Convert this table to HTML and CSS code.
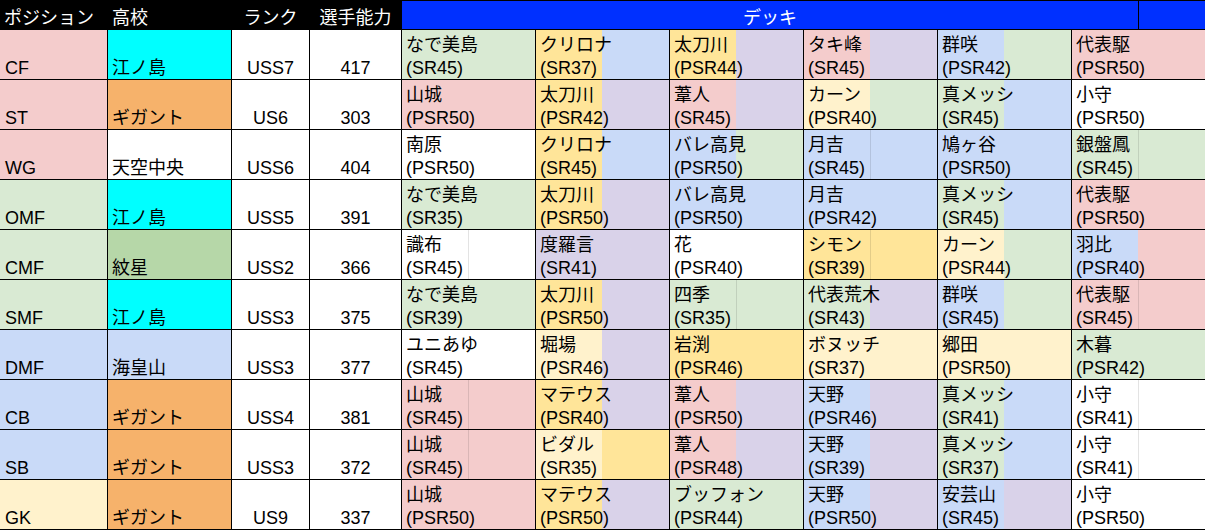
FILE: index.html
```html
<!DOCTYPE html>
<html lang="ja">
<head>
<meta charset="utf-8">
<title>デッキ</title>
<link rel="stylesheet" href="styles.css">
</head>
<body>
<div class="sheet">
  <div class="h">ポジション</div>
  <div class="h">高校</div>
  <div class="h c">ランク</div>
  <div class="h c">選手能力</div>
  <div class="hdeck"><div class="hd-main">デッキ</div><div class="hd-sep"></div><div class="hd-end"></div></div>

  <div class="cell pos pk">CF</div>
  <div class="cell sch cy">江ノ島</div>
  <div class="cell num">USS7</div>
  <div class="cell num">417</div>
  <div class="deck a-gr b-gr"><span>なで美島</span><span>(SR45)</span></div>
  <div class="deck a-ye b-bl"><span>クリロナ</span><span>(SR37)</span></div>
  <div class="deck a-ye b-pu"><span>太刀川</span><span>(PSR44)</span></div>
  <div class="deck a-pk b-pu"><span>タキ峰</span><span>(SR45)</span></div>
  <div class="deck a-bl b-gr"><span>群咲</span><span>(PSR42)</span></div>
  <div class="deck a-pk b-pk"><span>代表駆</span><span>(PSR50)</span></div>

  <div class="cell pos pk">ST</div>
  <div class="cell sch or">ギガント</div>
  <div class="cell num">US6</div>
  <div class="cell num">303</div>
  <div class="deck a-pk b-pk"><span>山城</span><span>(PSR50)</span></div>
  <div class="deck a-ye b-pu"><span>太刀川</span><span>(PSR42)</span></div>
  <div class="deck a-pk b-pu"><span>葦人</span><span>(SR45)</span></div>
  <div class="deck a-cr b-gr"><span>カーン</span><span>(PSR40)</span></div>
  <div class="deck a-gr b-bl"><span>真メッシ</span><span>(SR45)</span></div>
  <div class="deck a-wh b-wh"><span>小守</span><span>(PSR50)</span></div>

  <div class="cell pos pk">WG</div>
  <div class="cell sch wh">天空中央</div>
  <div class="cell num">USS6</div>
  <div class="cell num">404</div>
  <div class="deck a-wh b-wh"><span>南原</span><span>(PSR50)</span></div>
  <div class="deck a-ye b-bl"><span>クリロナ</span><span>(SR45)</span></div>
  <div class="deck a-bl b-gr"><span>バレ高見</span><span>(PSR50)</span></div>
  <div class="deck a-bl b-bl ln"><span>月吉</span><span>(SR45)</span></div>
  <div class="deck a-bl b-bl"><span>鳩ヶ谷</span><span>(PSR50)</span></div>
  <div class="deck a-gr b-gr ln"><span>銀盤鳳</span><span>(SR45)</span></div>

  <div class="cell pos gr">OMF</div>
  <div class="cell sch cy">江ノ島</div>
  <div class="cell num">USS5</div>
  <div class="cell num">391</div>
  <div class="deck a-gr b-gr"><span>なで美島</span><span>(SR35)</span></div>
  <div class="deck a-ye b-pu"><span>太刀川</span><span>(PSR50)</span></div>
  <div class="deck a-bl b-bl"><span>バレ高見</span><span>(PSR50)</span></div>
  <div class="deck a-bl b-bl"><span>月吉</span><span>(PSR42)</span></div>
  <div class="deck a-gr b-bl"><span>真メッシ</span><span>(SR45)</span></div>
  <div class="deck a-pk b-pk"><span>代表駆</span><span>(PSR50)</span></div>

  <div class="cell pos gr">CMF</div>
  <div class="cell sch g2">紋星</div>
  <div class="cell num">USS2</div>
  <div class="cell num">366</div>
  <div class="deck a-wh b-wh ln"><span>識布</span><span>(SR45)</span></div>
  <div class="deck a-pu b-pu"><span>度羅言</span><span>(SR41)</span></div>
  <div class="deck a-wh b-wh"><span>花</span><span>(PSR40)</span></div>
  <div class="deck a-ye b-ye ln"><span>シモン</span><span>(SR39)</span></div>
  <div class="deck a-cr b-gr"><span>カーン</span><span>(PSR44)</span></div>
  <div class="deck a-bl b-pk"><span>羽比</span><span>(PSR40)</span></div>

  <div class="cell pos gr">SMF</div>
  <div class="cell sch cy">江ノ島</div>
  <div class="cell num">USS3</div>
  <div class="cell num">375</div>
  <div class="deck a-gr b-gr"><span>なで美島</span><span>(SR39)</span></div>
  <div class="deck a-ye b-pu"><span>太刀川</span><span>(PSR50)</span></div>
  <div class="deck a-gr b-gr ln"><span>四季</span><span>(SR35)</span></div>
  <div class="deck a-gr b-pu"><span>代表荒木</span><span>(SR43)</span></div>
  <div class="deck a-bl b-gr"><span>群咲</span><span>(SR45)</span></div>
  <div class="deck a-pk b-pk ln"><span>代表駆</span><span>(SR45)</span></div>

  <div class="cell pos bl">DMF</div>
  <div class="cell sch bl">海皇山</div>
  <div class="cell num">USS3</div>
  <div class="cell num">377</div>
  <div class="deck a-wh b-wh"><span>ユニあゆ</span><span>(SR45)</span></div>
  <div class="deck a-cr b-pu"><span>堀場</span><span>(PSR46)</span></div>
  <div class="deck a-ye b-ye"><span>岩渕</span><span>(PSR46)</span></div>
  <div class="deck a-cr b-cr"><span>ボヌッチ</span><span>(SR37)</span></div>
  <div class="deck a-cr b-cr"><span>郷田</span><span>(PSR50)</span></div>
  <div class="deck a-gr b-gr"><span>木暮</span><span>(PSR42)</span></div>

  <div class="cell pos bl">CB</div>
  <div class="cell sch or">ギガント</div>
  <div class="cell num">USS4</div>
  <div class="cell num">381</div>
  <div class="deck a-pk b-pk ln"><span>山城</span><span>(SR45)</span></div>
  <div class="deck a-ye b-pu"><span>マテウス</span><span>(PSR40)</span></div>
  <div class="deck a-pk b-pu"><span>葦人</span><span>(PSR50)</span></div>
  <div class="deck a-bl b-pu"><span>天野</span><span>(PSR46)</span></div>
  <div class="deck a-gr b-bl"><span>真メッシ</span><span>(SR41)</span></div>
  <div class="deck a-wh b-wh ln"><span>小守</span><span>(SR41)</span></div>

  <div class="cell pos bl">SB</div>
  <div class="cell sch or">ギガント</div>
  <div class="cell num">USS3</div>
  <div class="cell num">372</div>
  <div class="deck a-pk b-pk ln"><span>山城</span><span>(SR45)</span></div>
  <div class="deck a-cr b-ye"><span>ビダル</span><span>(SR35)</span></div>
  <div class="deck a-pk b-pu"><span>葦人</span><span>(PSR48)</span></div>
  <div class="deck a-bl b-pu"><span>天野</span><span>(SR39)</span></div>
  <div class="deck a-gr b-bl"><span>真メッシ</span><span>(SR37)</span></div>
  <div class="deck a-wh b-wh ln"><span>小守</span><span>(SR41)</span></div>

  <div class="cell pos cr">GK</div>
  <div class="cell sch or">ギガント</div>
  <div class="cell num">US9</div>
  <div class="cell num">337</div>
  <div class="deck a-pk b-pk"><span>山城</span><span>(PSR50)</span></div>
  <div class="deck a-ye b-pu"><span>マテウス</span><span>(PSR50)</span></div>
  <div class="deck a-gr b-gr"><span>ブッフォン</span><span>(PSR44)</span></div>
  <div class="deck a-bl b-pu"><span>天野</span><span>(PSR50)</span></div>
  <div class="deck a-bl b-pu"><span>安芸山</span><span>(SR45)</span></div>
  <div class="deck a-wh b-wh"><span>小守</span><span>(PSR50)</span></div>
</div>
</body>
</html>
```

FILE: styles.css
```css
html, body {
  margin: 0;
  padding: 0;
  background: #fff;
}

.sheet {
  width: 1205px;
  display: grid;
  grid-template-columns: 107px 123px 77px 91px repeat(6, 133px);
  grid-template-rows: 29px repeat(10, 49px);
  gap: 1px;
  padding-bottom: 1px;
  background: #000;
  font-family: "Liberation Sans", "Noto Sans CJK JP", sans-serif;
  font-size: 18px;
  color: #000;
}

.h {
  background: #000;
  color: #fff;
  display: flex;
  align-items: flex-end;
  padding: 0 4px;
  line-height: 22px;
  white-space: nowrap;
}
.h.c { justify-content: center; }

.hdeck {
  grid-column: 5 / -1;
  display: flex;
  border-top: 1px solid #000;
  background: #000;
}
.hd-main {
  flex: 1;
  background: #0030ff;
  color: #fff;
  display: flex;
  align-items: flex-end;
  justify-content: center;
  line-height: 22px;
}
.hd-sep { width: 1px; background: #000; }
.hd-end { width: 66px; background: #0030ff; }

.cell {
  display: flex;
  align-items: flex-end;
  padding: 0 4px 0 5px;
  line-height: 22px;
  white-space: nowrap;
  background: #fff;
}
.cell.sch { padding-left: 4px; }
.cell.num { justify-content: center; padding: 0; }

.pk { background: #f4cccc; }
.gr { background: #d9ead3; }
.bl { background: #c9daf8; }
.cr { background: #fff2cc; }
.cy { background: #00ffff; }
.or { background: #f6b26b; }
.g2 { background: #b6d7a8; }
.wh { background: #ffffff; }

.deck {
  --a: #fff;
  --b: #fff;
  display: flex;
  flex-direction: column;
  justify-content: flex-end;
  padding: 0 0 0 4px;
  line-height: 22.5px;
  white-space: nowrap;
  overflow: hidden;
  background: linear-gradient(to right, var(--a) 0 66px, var(--b) 66px);
}
.deck.ln {
  background:
    linear-gradient(to right, transparent 66px, rgba(0, 0, 0, 0.11) 66px 67px, transparent 67px),
    linear-gradient(to right, var(--a) 0 66px, var(--b) 66px);
}
.deck span { display: block; }

.a-pk { --a: #f4cccc; }
.a-gr { --a: #d9ead3; }
.a-bl { --a: #c9daf8; }
.a-pu { --a: #d9d2e9; }
.a-ye { --a: #ffe599; }
.a-cr { --a: #fff2cc; }
.a-wh { --a: #ffffff; }
.b-pk { --b: #f4cccc; }
.b-gr { --b: #d9ead3; }
.b-bl { --b: #c9daf8; }
.b-pu { --b: #d9d2e9; }
.b-ye { --b: #ffe599; }
.b-cr { --b: #fff2cc; }
.b-wh { --b: #ffffff; }
```
